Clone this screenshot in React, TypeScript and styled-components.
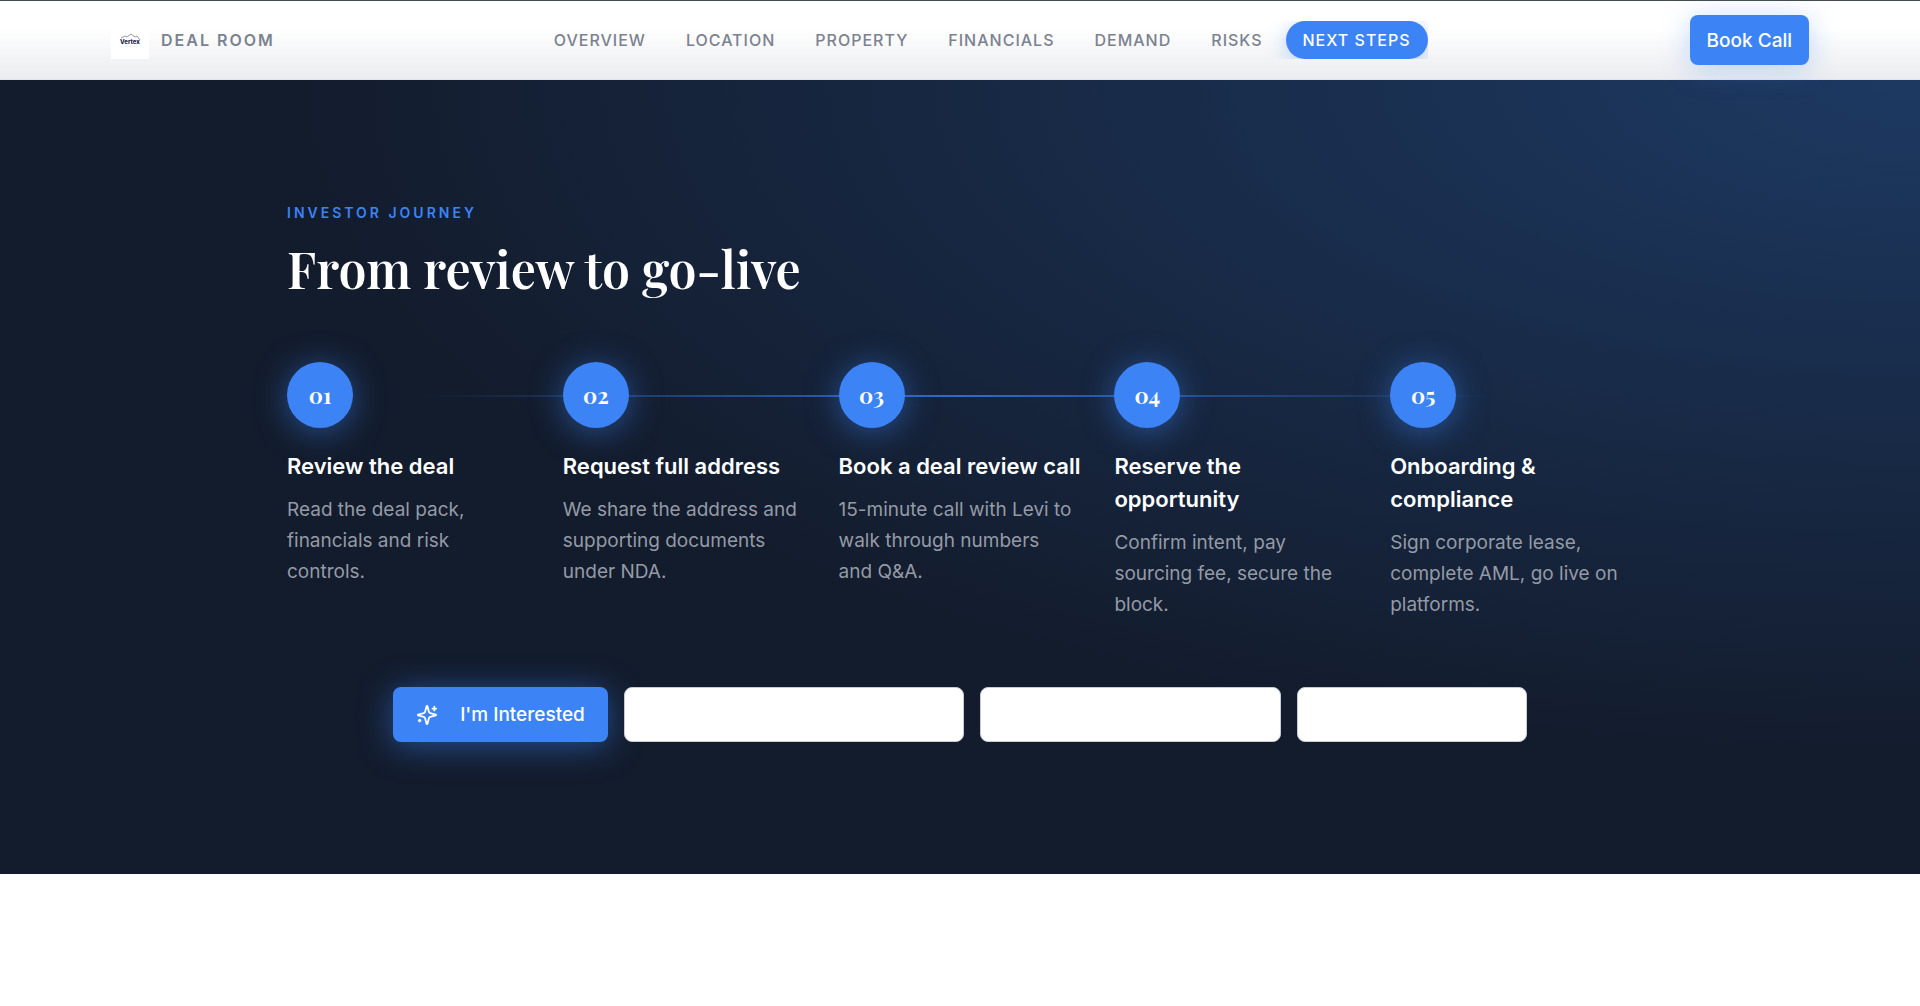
import React from "react";
import styled, { createGlobalStyle, css } from "styled-components";

const sans = `Inter, "Liberation Sans", sans-serif`;
const serif = `"Playfair Display", "Liberation Serif", serif`;

const GlobalStyle = createGlobalStyle`
  *, *::before, *::after { box-sizing: border-box; }
  body { margin: 0; background: #ffffff; font-family: ${sans}; }
  h2, h3, p, ol { margin: 0; padding: 0; }
`;

const Header = styled.header`
  display: flex;
  justify-content: center;
  height: 80px;
  border-top: 1px solid #444c50;
  border-bottom: 1px solid #dfe5ee;
  background: linear-gradient(180deg, #ffffff 35%, #ebecef 100%);
`;

const HeaderInner = styled.div`
  display: flex;
  align-items: center;
  justify-content: space-between;
  width: 100%;
  max-width: 1730px;
  padding: 0 16px;
`;

const Brand = styled.a`
  display: flex;
  align-items: center;
  gap: 12px;
  color: #7b8290;
  font-size: 16px;
  font-weight: 600;
  letter-spacing: 2px;
  text-decoration: none;
`;

const Logo = styled.svg`
  width: 38px;
  height: 38px;
  background: #ffffff;
  letter-spacing: 0;
`;

const Nav = styled.nav`
  display: flex;
  gap: 6px;
  overflow: hidden;
`;

const NavLink = styled.a<{ $active?: boolean }>`
  padding: 0 17px;
  border-radius: 20px;
  color: #7b8290;
  font-size: 16px;
  font-weight: 500;
  line-height: 38px;
  letter-spacing: 1px;
  text-decoration: none;
  ${(p) =>
    p.$active &&
    css`
      color: #ffffff;
      background: #3c83f6;
      box-shadow: 0 4px 20px rgba(60, 131, 246, 0.35);
    `}
`;

const blueGlow = css`
  color: #ffffff;
  background: #3c83f6;
  border: 0;
`;

const BookButton = styled.button`
  ${blueGlow}
  height: 50px;
  padding: 0 17px;
  border-radius: 8px;
  box-shadow: 0 4px 30px rgba(60, 131, 246, 0.3);
  font-family: ${sans};
  font-size: 19px;
  font-weight: 500;
`;

const Journey = styled.section`
  display: flex;
  justify-content: center;
  padding: 122px 32px 132px;
  background: radial-gradient(ellipse at top right, #1d3962 0%, #131c2d 60%);
`;

const JourneyInner = styled.div`
  width: 100%;
  max-width: 1346px;
`;

const Eyebrow = styled.p`
  color: #3c83f6;
  font-size: 14px;
  font-weight: 600;
  line-height: 22px;
  letter-spacing: 3px;
  text-transform: uppercase;
`;

const Title = styled.h2`
  margin-top: 16px;
  color: #ffffff;
  font-family: ${serif};
  font-size: 50px;
  font-weight: 600;
  line-height: 57px;
`;

const Steps = styled.ol`
  position: relative;
  display: grid;
  grid-template-columns: repeat(5, 1fr);
  gap: 33px;
  margin-top: 65px;
  list-style: none;

  &::before {
    content: "";
    position: absolute;
    top: 33px;
    left: 10%;
    right: 10%;
    height: 2px;
    background: linear-gradient(90deg, transparent, #2f6bcb, transparent);
  }
`;

const Step = styled.li`
  position: relative;
`;

const StepNumber = styled.div`
  ${blueGlow}
  display: flex;
  align-items: center;
  justify-content: center;
  width: 66px;
  height: 66px;
  border-radius: 50%;
  box-shadow: 0 4px 32px rgba(60, 131, 246, 0.5);
  font-family: ${serif};
  font-size: 22px;
  font-weight: 700;
`;

const StepTitle = styled.h3`
  margin: 22px 0 11px;
  color: #ffffff;
  font-size: 22px;
  font-weight: 600;
  line-height: 33px;
`;

const StepText = styled.p`
  color: #949aa5;
  font-size: 19px;
  line-height: 31px;
`;

const Actions = styled.div`
  display: flex;
  justify-content: center;
  gap: 16px;
  margin-top: 67px;
`;

const InterestButton = styled.button`
  ${blueGlow}
  display: flex;
  align-items: center;
  gap: 22px;
  height: 55px;
  padding: 0 23px;
  border-radius: 8px;
  box-shadow: 0 4px 32px rgba(60, 131, 246, 0.5);
  font-family: ${sans};
  font-size: 19px;
  font-weight: 500;
`;

const SparkIcon = styled.svg`
  width: 22px;
  height: 22px;
`;

const BlankButton = styled.button<{ $width: number }>`
  flex: 0 1 ${(p) => p.$width}px;
  height: 55px;
  border: 1px solid #c5ccd8;
  border-radius: 8px;
  background: #ffffff;
`;

const navItems = ["Overview", "Location", "Property", "Financials", "Demand", "Risks", "Next steps"];

const steps = [
  { title: "Review the deal", text: "Read the deal pack, financials and risk controls." },
  { title: "Request full address", text: "We share the address and supporting documents under NDA." },
  { title: "Book a deal review call", text: "15-minute call with Levi to walk through numbers and\u00a0Q&A." },
  { title: "Reserve the opportunity", text: "Confirm intent, pay sourcing fee, secure the block." },
  { title: "Onboarding & compliance", text: "Sign corporate lease, complete AML, go live on platforms." },
];

export default function App() {
  return (
    <>
      <GlobalStyle />
      <Header>
        <HeaderInner>
          <Brand href="#top">
            <Logo viewBox="0 0 38 38" aria-hidden="true">
              <path d="M10 17 L14 15 L16 16 L20 13 L24 16 L26 15 L29 19" fill="none" stroke="#7c8088" strokeWidth="0.8" />
              <text x="19" y="23" textAnchor="middle" fontFamily="Inter, sans-serif" fontSize="6" fontWeight="800" fill="#1d1b4c">
                Vertex
              </text>
              <path d="M13 25h12" stroke="#dcdce4" strokeWidth="0.5" />
            </Logo>
            DEAL ROOM
          </Brand>
          <Nav>
            {navItems.map((item) => (
              <NavLink key={item} href="#journey" $active={item === "Next steps"}>
                {item.toUpperCase()}
              </NavLink>
            ))}
          </Nav>
          <BookButton type="button">Book Call</BookButton>
        </HeaderInner>
      </Header>
      <Journey id="journey">
        <JourneyInner>
          <Eyebrow>Investor journey</Eyebrow>
          <Title>From review to go-live</Title>
          <Steps>
            {steps.map((step, i) => (
              <Step key={step.title}>
                <StepNumber>0{i + 1}</StepNumber>
                <StepTitle>{step.title}</StepTitle>
                <StepText>{step.text}</StepText>
              </Step>
            ))}
          </Steps>
          <Actions>
            <InterestButton type="button">
              <SparkIcon
                viewBox="0 0 24 24"
                fill="none"
                stroke="currentColor"
                strokeWidth="2"
                strokeLinecap="round"
                strokeLinejoin="round"
                aria-hidden="true"
              >
                <path d="M9.937 15.5A2 2 0 0 0 8.5 14.063l-6.135-1.582a.5.5 0 0 1 0-.962L8.5 9.936A2 2 0 0 0 9.937 8.5l1.582-6.135a.5.5 0 0 1 .963 0L14.063 8.5A2 2 0 0 0 15.5 9.937l6.135 1.581a.5.5 0 0 1 0 .964L15.5 14.063a2 2 0 0 0-1.437 1.437l-1.582 6.135a.5.5 0 0 1-.963 0z" />
                <path d="M20 3v4M22 5h-4M4 17v2M5 18H3" />
              </SparkIcon>
              I'm Interested
            </InterestButton>
            <BlankButton type="button" $width={340} aria-label="Request full address" />
            <BlankButton type="button" $width={301} aria-label="Book review call" />
            <BlankButton type="button" $width={230} aria-label="Ask a question" />
          </Actions>
        </JourneyInner>
      </Journey>
    </>
  );
}
